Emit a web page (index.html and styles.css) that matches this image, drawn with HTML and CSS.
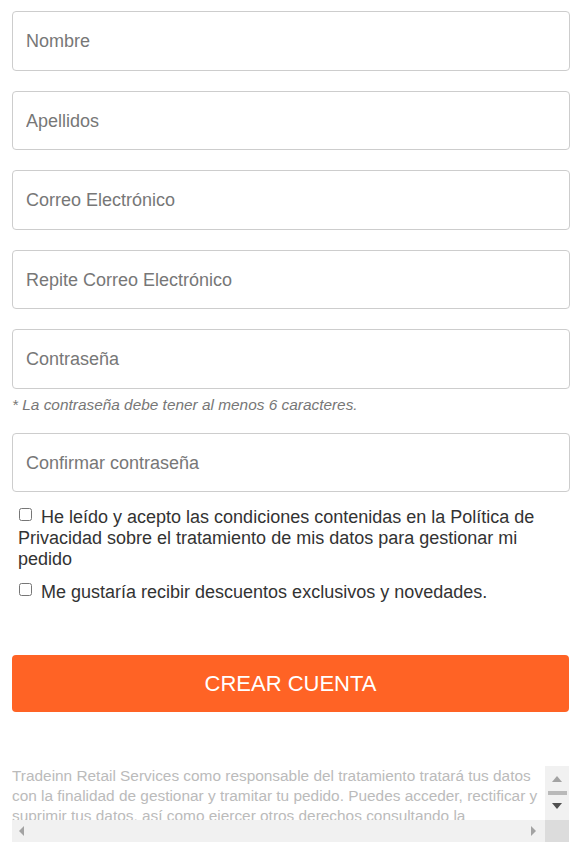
FILE: index.html
```html
<!DOCTYPE html>
<html lang="es">
<head>
<meta charset="utf-8">
<title>Crear cuenta</title>
<link rel="stylesheet" href="styles.css">
</head>
<body>
<form class="form">
  <input class="field" type="text" placeholder="Nombre">
  <input class="field" type="text" placeholder="Apellidos">
  <input class="field" type="email" placeholder="Correo Electrónico">
  <input class="field" type="email" placeholder="Repite Correo Electrónico">
  <input class="field field--tight" type="password" placeholder="Contraseña">
  <p class="hint">* La contraseña debe tener al menos 6 caracteres.</p>
  <input class="field field--last" type="password" placeholder="Confirmar contraseña">
  <div class="checks">
    <label class="check"><input class="box" type="checkbox"> He leído y acepto las condiciones contenidas en la Política de Privacidad sobre el tratamiento de mis datos para gestionar mi pedido</label>
    <label class="check check--next"><input class="box" type="checkbox"> Me gustaría recibir descuentos exclusivos y novedades.</label>
  </div>
  <button class="submit" type="button">CREAR CUENTA</button>
  <div class="legal">
    <div class="legal-text">Tradeinn Retail Services como responsable del tratamiento tratará tus datos con la finalidad de gestionar y tramitar tu pedido. Puedes acceder, rectificar y suprimir tus datos, así como ejercer otros derechos consultando la información adicional y detallada sobre protección de datos en nuestra Política de Privacidad.</div>
    <div class="vbar">
      <svg class="arrow-v" width="10" height="6" viewBox="0 0 10 6"><polygon points="5,0 10,6 0,6" fill="#a3a3a3"/></svg>
      <div class="thumb"></div>
      <svg class="arrow-v" width="10" height="6" viewBox="0 0 10 6"><polygon points="0,0 10,0 5,6" fill="#505050"/></svg>
    </div>
    <div class="hbar">
      <svg width="5" height="10" viewBox="0 0 5 10"><polygon points="5,0 5,10 0,5" fill="#a3a3a3"/></svg>
      <svg width="5" height="10" viewBox="0 0 5 10"><polygon points="0,0 5,5 0,10" fill="#a3a3a3"/></svg>
    </div>
    <div class="corner"></div>
  </div>
</form>
</body>
</html>
```

FILE: styles.css
```css
html, body {
  margin: 0;
  padding: 0;
  background: #fff;
}

body {
  font-family: "Liberation Sans", Arial, sans-serif;
  color: #333;
}

.form {
  display: flex;
  flex-direction: column;
  padding: 11px 15px 0 12px;
}

.field {
  box-sizing: border-box;
  height: 59.5px;
  margin: 0 0 20px;
  padding: 2px 13px 0;
  border: 1px solid #cdcdcd;
  border-radius: 4px;
  background: #fff;
  font-family: "Liberation Sans", Arial, sans-serif;
  font-size: 18px;
  color: #333;
  outline: none;
}

.field::placeholder {
  color: #777;
  opacity: 1;
}

.field--tight {
  margin-bottom: 0;
}

.field--last {
  margin-bottom: 15px;
}

.hint {
  margin: 7px 0 19px;
  font-size: 15.4px;
  line-height: 18px;
  font-style: italic;
  color: #777;
}

.checks {
  display: flex;
  flex-direction: column;
}

.check {
  display: block;
  padding-left: 6px;
  font-size: 18px;
  line-height: 21px;
  color: #333;
}

.check--next {
  margin-top: 12px;
}

.box {
  width: 13px;
  height: 13px;
  margin: 1px 4px 0 1px;
  vertical-align: top;
}

.submit {
  height: 57px;
  margin: 52px 1px 0 0;
  border: none;
  border-radius: 4px;
  background: #ff6325;
  color: #fff;
  font-family: "Liberation Sans", Arial, sans-serif;
  font-size: 22px;
  cursor: pointer;
}

.legal {
  display: grid;
  grid-template-columns: 1fr 24px;
  grid-template-rows: 54px 22px;
  margin: 54px 1px 0 0;
}

.legal-text {
  overflow: hidden;
  font-size: 15.4px;
  line-height: 20px;
  color: #bbb;
}

.vbar {
  display: flex;
  flex-direction: column;
  align-items: center;
  padding-top: 10px;
  background: #f1f1f1;
}

.vbar .arrow-v {
  display: block;
}

.thumb {
  width: 19px;
  height: 4px;
  margin: 9px 0 8px;
  background: #b9b9b9;
}

.hbar {
  display: flex;
  justify-content: space-between;
  align-items: center;
  padding: 0 9px 0 7px;
  background: #f1f1f1;
}

.hbar svg {
  display: block;
}

.corner {
  background: #dcdcdc;
}
```
